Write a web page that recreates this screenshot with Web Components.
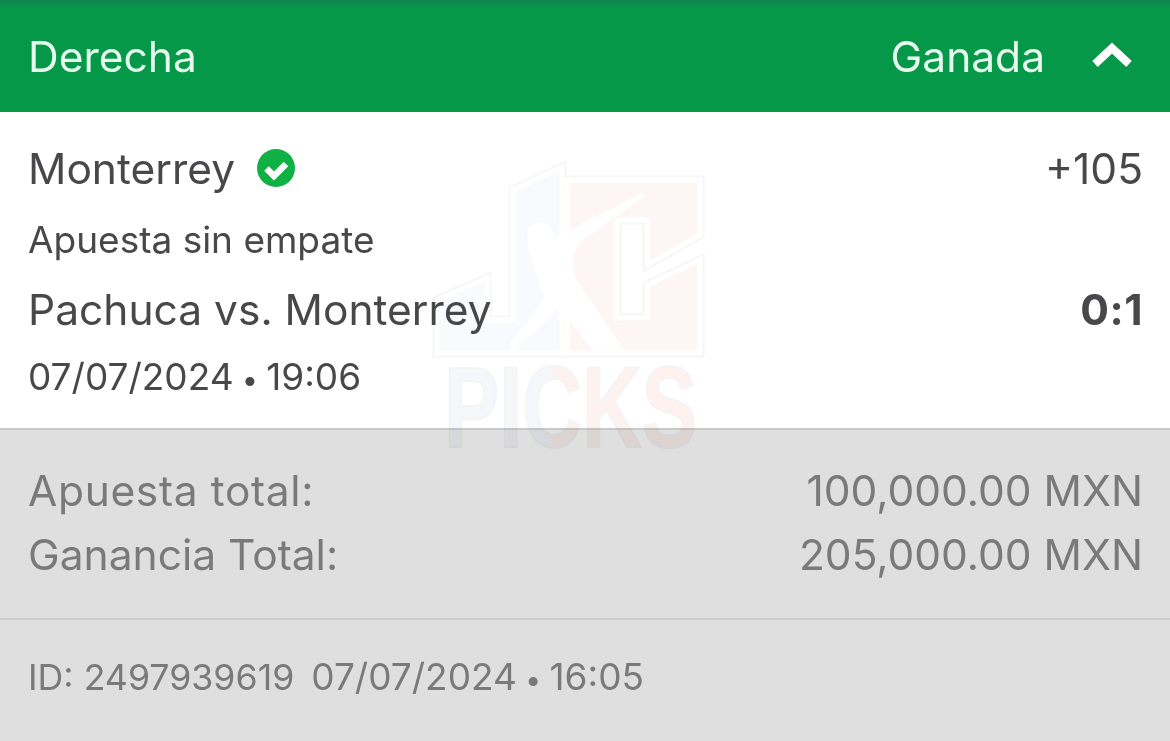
<!DOCTYPE html>
<html>
<head>
<meta charset="utf-8">
<style>
html, body { margin: 0; padding: 0; background: #dfdfdf; }
body { font-family: Inter, Roboto, "Liberation Sans", sans-serif; width: 1170px; height: 741px; overflow: hidden; }
</style>
</head>
<body>
<bet-card>
  <bet-header outcome="Ganada">Derecha</bet-header>
  <bet-selection team="Monterrey" odds="+105" market="Apuesta sin empate" event="Pachuca vs. Monterrey" score="0:1" date="07/07/2024" time="19:06"></bet-selection>
  <bet-totals>
    <bet-row label="Apuesta total:" value="100,000.00 MXN" style="--label-spacing: .65px"></bet-row>
    <bet-row label="Ganancia Total:" value="205,000.00 MXN"></bet-row>
  </bet-totals>
  <bet-footer ticket="2497939619" date="07/07/2024" time="16:05"></bet-footer>
  <bet-watermark></bet-watermark>
</bet-card>
<script>
class BetCard extends HTMLElement
{
    constructor()
    {
        super();
        this.attachShadow({mode: "open"}).innerHTML = `
            <style>
                :host { display: flex; flex-direction: column; position: relative; height: 741px; overflow: hidden; }
            </style>
            <slot></slot>
        `;
    }
}
class BetHeader extends HTMLElement
{
    constructor()
    {
        super();
        this.attachShadow({mode: "open"}).innerHTML = `
            <style>
                :host {
                    display: flex; flex: none; align-items: center; justify-content: space-between;
                    height: 112px; box-sizing: border-box; padding: 0 38px 0 28px;
                    background: linear-gradient(#0f8350 0, #059848 8px);
                    color: #e6fbee; font-size: 42.5px;
                }
                .right { display: flex; align-items: center; gap: 47px; }
                svg { width: 40px; height: 26px; display: block; margin-top: -2px; }
            </style>
            <span><slot></slot></span>
            <div class="right">
                <span>${this.getAttribute("outcome")}</span>
                <svg viewBox="0 0 40 26"><path d="M3 22 L20 6 L37 22" fill="none" stroke="#fff" stroke-width="8"/></svg>
            </div>
        `;
    }
}
class BetSelection extends HTMLElement
{
    constructor()
    {
        super();
        const a = (n) => this.getAttribute(n);
        this.attachShadow({mode: "open"}).innerHTML = `
            <style>
                :host {
                    display: flex; flex: none; flex-direction: column; box-sizing: border-box;
                    height: 318px; padding: 0 27px 0 28px;
                    background: #fff; color: #48484a; border-bottom: 2px solid #c9c9c9;
                }
                .row { display: flex; justify-content: space-between; align-items: center; height: 40px; }
                .r1 { margin-top: 36px; font-size: 42.5px; }
                .r2 { margin-top: 31px; font-size: 37px; }
                .r3 { margin-top: 30px; font-size: 42.5px; }
                .r4 { margin-top: 27px; font-size: 37px; }
                .team { display: flex; align-items: center; gap: 22px; }
                svg { width: 38px; height: 38px; display: block; }
                b { font-weight: 700; letter-spacing: .5px; }
                .dot { font-size: 29px; }
            </style>
            <div class="row r1">
                <span class="team">${a("team")}
                    <svg viewBox="0 0 38 38"><circle cx="19" cy="19" r="19" fill="#0fb044"/><path d="M9.5 19.5 L17 27 L29 15" fill="none" stroke="#fff" stroke-width="6.5"/></svg>
                </span>
                <span>${a("odds")}</span>
            </div>
            <div class="row r2"><span>${a("market")}</span></div>
            <div class="row r3"><span>${a("event")}</span><b>${a("score")}</b></div>
            <div class="row r4"><span>${a("date")}<span class="dot"> • </span>${a("time")}</span></div>
        `;
    }
}
class BetTotals extends HTMLElement
{
    constructor()
    {
        super();
        this.attachShadow({mode: "open"}).innerHTML = `
            <style>
                :host {
                    display: flex; flex: none; flex-direction: column; gap: 24px; box-sizing: border-box;
                    height: 190px; padding: 40px 27px 0 28px;
                    background: #dfdfdf; border-bottom: 2px solid #cbcbcb;
                }
            </style>
            <slot></slot>
        `;
    }
}
class BetRow extends HTMLElement
{
    constructor()
    {
        super();
        this.attachShadow({mode: "open"}).innerHTML = `
            <style>
                :host {
                    display: flex; justify-content: space-between; align-items: center;
                    height: 40px; font-size: 42.5px; color: #7a7a7a;
                }
                .label { letter-spacing: var(--label-spacing, 0); }
            </style>
            <span class="label">${this.getAttribute("label")}</span>
            <span>${this.getAttribute("value")}</span>
        `;
    }
}
class BetFooter extends HTMLElement
{
    constructor()
    {
        super();
        const a = (n) => this.getAttribute(n);
        this.attachShadow({mode: "open"}).innerHTML = `
            <style>
                :host {
                    display: flex; flex: 1; gap: 17px; padding: 37px 28px 0;
                    background: #dfdfdf; color: #7a7a7a; font-size: 37px; line-height: 40px;
                }
                .id { font-size: 35.7px; }
                .dot { font-size: 29px; }
            </style>
            <span class="id">ID: ${a("ticket")}</span>
            <span>${a("date")}<span class="dot"> • </span>${a("time")}</span>
        `;
    }
}
class BetWatermark extends HTMLElement
{
    constructor()
    {
        super();
        this.attachShadow({mode: "open"}).innerHTML = `
            <style>
                :host { position: absolute; left: 420px; top: 150px; width: 300px; height: 330px; pointer-events: none; mix-blend-mode: multiply; }
                svg { display: block; width: 100%; height: 100%; }
                text { font-family: "Liberation Sans", sans-serif; font-weight: 700; font-size: 115px; }
            </style>
            <svg viewBox="0 0 300 330">
                <defs>
                    <linearGradient id="split" gradientUnits="userSpaceOnUse" x1="0" x2="300" y1="0" y2="0">
                        <stop offset=".5" stop-color="#f5f7fb"/>
                        <stop offset=".5" stop-color="#fdf2ef"/>
                    </linearGradient>
                </defs>
                <g stroke="#f6f6f6" stroke-width="9" fill="none">
                    <path d="M93 40 L142 17 L142 203 L17 203 L17 150 L67 128 L67 170 L93 170 Z"/>
                    <path d="M147 30 L280 30 L280 85 L227 115 L227 70 L197 70 L197 168 L227 168 L227 135 L280 110 L280 203 L147 203 Z"/>
                </g>
                <path d="M93 40 L142 17 L142 203 L17 203 L17 150 L67 128 L67 170 L93 170 Z" fill="#f8fafd" stroke="#fff" stroke-width="5"/>
                <path d="M147 30 L280 30 L280 85 L227 115 L227 70 L197 70 L197 168 L227 168 L227 135 L280 110 L280 203 L147 203 Z" fill="#fef6f4" stroke="#fff" stroke-width="5"/>
                <path d="M108 78 C118 68 132 72 135 88 L222 42 L225 46 L160 92 C150 108 152 118 158 132 C172 152 188 176 204 200 L172 200 C160 182 150 170 136 160 C122 176 110 186 92 202 L90 192 C100 180 112 166 124 148 C116 122 104 98 108 78 Z" fill="#fff"/>
                <text transform="translate(24 297) scale(.72 1)" fill="url(#split)" stroke="#f4f4f4" stroke-width="2">PICKS</text>
            </svg>
        `;
    }
}
customElements.define('bet-card', BetCard);
customElements.define('bet-header', BetHeader);
customElements.define('bet-selection', BetSelection);
customElements.define('bet-totals', BetTotals);
customElements.define('bet-row', BetRow);
customElements.define('bet-footer', BetFooter);
customElements.define('bet-watermark', BetWatermark);
</script>
</body>
</html>
